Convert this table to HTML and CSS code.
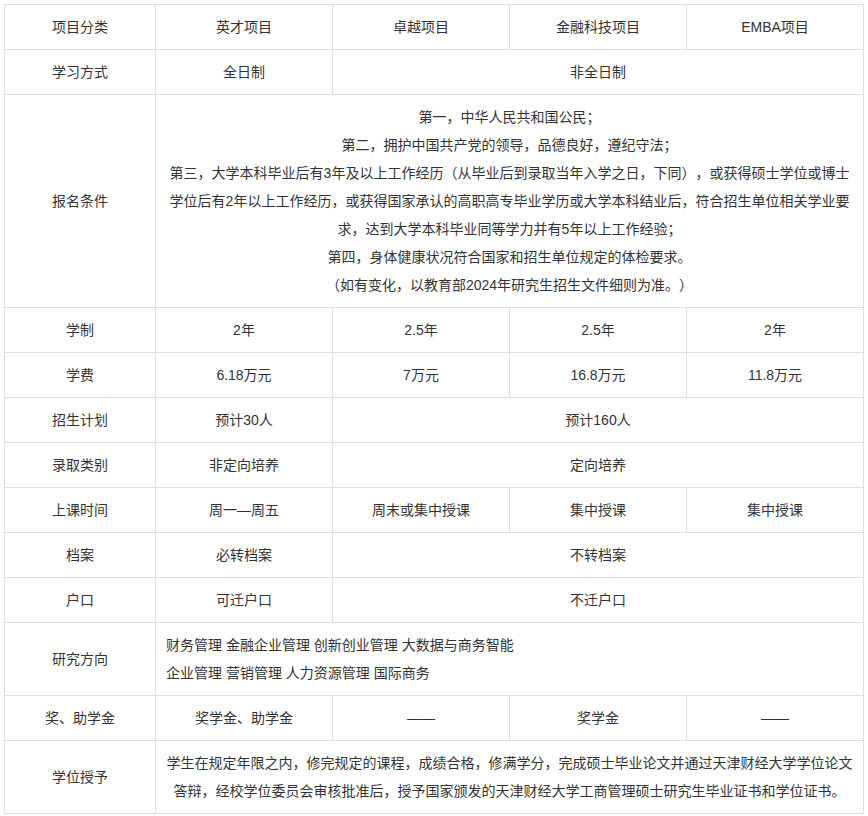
FILE: index.html
```html
<!DOCTYPE html>
<html lang="zh-CN">
<head>
<meta charset="utf-8">
<title>项目对比</title>
<link rel="stylesheet" href="styles.css">
</head>
<body>
<div class="wrap">
<table class="info">
  <colgroup>
    <col class="c-label">
    <col class="c-item">
    <col class="c-item">
    <col class="c-item">
    <col class="c-item">
  </colgroup>
  <tbody>
    <tr><td>项目分类</td><td>英才项目</td><td>卓越项目</td><td>金融科技项目</td><td>EMBA项目</td></tr>
    <tr><td>学习方式</td><td>全日制</td><td colspan="3">非全日制</td></tr>
    <tr><td>报名条件</td><td colspan="4" class="cond">第一，中华人民共和国公民；<br>第二，拥护中国共产党的领导，品德良好，遵纪守法；<br>第三，大学本科毕业后有3年及以上工作经历（从毕业后到录取当年入学之日，下同），或获得硕士学位或博士学位后有2年以上工作经历，或获得国家承认的高职高专毕业学历或大学本科结业后，符合招生单位相关学业要求，达到大学本科毕业同等学力并有5年以上工作经验；<br>第四，身体健康状况符合国家和招生单位规定的体检要求。<br>（如有变化，以教育部2024年研究生招生文件细则为准。）</td></tr>
    <tr><td>学制</td><td>2年</td><td>2.5年</td><td>2.5年</td><td>2年</td></tr>
    <tr><td>学费</td><td>6.18万元</td><td>7万元</td><td>16.8万元</td><td>11.8万元</td></tr>
    <tr><td>招生计划</td><td>预计30人</td><td colspan="3">预计160人</td></tr>
    <tr><td>录取类别</td><td>非定向培养</td><td colspan="3">定向培养</td></tr>
    <tr><td>上课时间</td><td>周一—周五</td><td>周末或集中授课</td><td>集中授课</td><td>集中授课</td></tr>
    <tr><td>档案</td><td>必转档案</td><td colspan="3">不转档案</td></tr>
    <tr><td>户口</td><td>可迁户口</td><td colspan="3">不迁户口</td></tr>
    <tr><td>研究方向</td><td colspan="4" class="left">财务管理 金融企业管理 创新创业管理 大数据与商务智能<br>企业管理 营销管理 人力资源管理 国际商务</td></tr>
    <tr><td>奖、助学金</td><td>奖学金、助学金</td><td>——</td><td>奖学金</td><td>——</td></tr>
    <tr><td>学位授予</td><td colspan="4">学生在规定年限之内，修完规定的课程，成绩合格，修满学分，完成硕士毕业论文并通过天津财经大学学位论文答辩，经校学位委员会审核批准后，授予国家颁发的天津财经大学工商管理硕士研究生毕业证书和学位证书。</td></tr>
  </tbody>
</table>
</div>
</body>
</html>
```

FILE: styles.css
```css
html, body {
  margin: 0;
  padding: 0;
  background: #fff;
}

.wrap {
  padding: 4px;
}

.info {
  width: 860px;
  table-layout: fixed;
  border-collapse: collapse;
  font-family: "Liberation Sans", "Noto Sans CJK SC", sans-serif;
  font-size: 14px;
  line-height: 28px;
  color: #333;
  text-spacing-trim: space-all;
}

.c-label {
  width: 151px;
}

.c-item {
  width: 177px;
}

.info td {
  border: 1px solid #ddd;
  padding: 8px 10px;
  text-align: center;
  vertical-align: middle;
}

.info td.left {
  text-align: left;
}
```
